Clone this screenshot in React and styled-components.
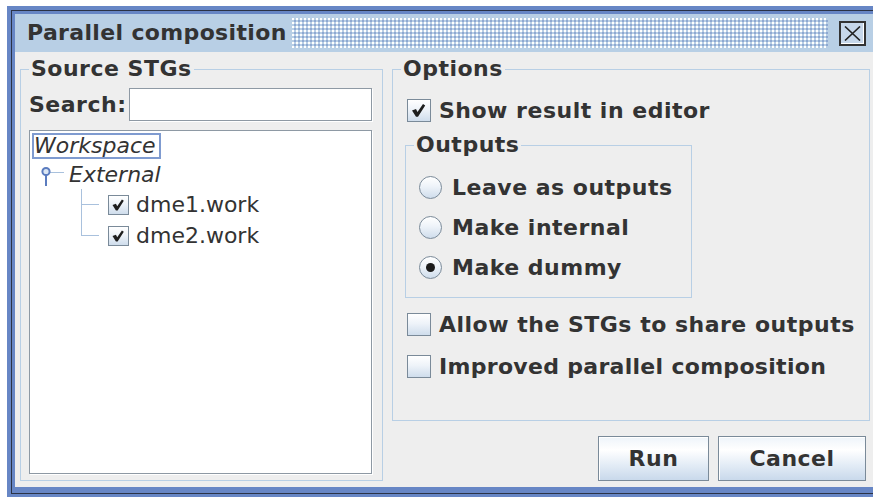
import React from 'react';
import styled, { createGlobalStyle } from 'styled-components';

const GlobalStyle = createGlobalStyle`
  html, body {
    margin: 0;
    padding: 0;
    background: #ffffff;
    overflow: hidden;
  }
  body {
    font-family: "DejaVu Sans", Verdana, sans-serif;
    font-size: 22px;
    color: #333333;
  }
  * { box-sizing: border-box; }
`;

const Frame = styled.div`
  margin: 6px 0 0 7px;
  width: 875px;
  padding: 4px;
  background: #6786c5;
`;

const Rim = styled.div`
  border: 1px solid #2b3346;
  padding: 3px 3px 6px 3px;
  background: #6786c5;
`;

const Window = styled.div`
  height: 473px;
  display: flex;
  flex-direction: column;
  background: #eeeeee;
`;

const TitleBar = styled.div`
  height: 38px;
  flex: none;
  display: flex;
  align-items: center;
  padding: 0 8px 0 12px;
  background: #b8cfe5;
`;

const Title = styled.div`
  font-weight: bold;
  letter-spacing: 0.35px;
  line-height: 26px;
  white-space: nowrap;
`;

const Bumps = styled.div`
  flex: 1;
  height: 30px;
  margin: 0 11px 0 5px;
  background-image:
    radial-gradient(circle at 1px 1px, #ffffff 0.9px, transparent 1.3px),
    radial-gradient(circle at 1px 1px, #8ea8d2 0.8px, transparent 1.2px);
  background-size: 4px 4px, 4px 4px;
  background-position: 0 0, 2px 2px;
`;

const CloseBox = styled.div`
  width: 27px;
  height: 25px;
  flex: none;
  border: 2px solid #333333;
  box-shadow: inset -1px -1px 0 #ffffff;
  background: #c6d7ea;
  display: flex;
  align-items: center;
  justify-content: center;
`;

const Body = styled.div`
  flex: 1;
  display: flex;
  gap: 9px;
  padding: 4px 4px 6px 5px;
  min-height: 0;
`;

const Group = styled.fieldset`
  margin: 0;
  min-width: 0;
  border: 1px solid #b8cfe5;
  display: flex;
  flex-direction: column;
  padding: ${(p) => p.$pad};
  width: ${(p) => (p.$w ? `${p.$w}px` : 'auto')};
  flex: ${(p) => (p.$grow ? 1 : 'none')};
`;

/* legend sits after the fieldset's left padding, so pull it back to 8px from the border */
const Caption = styled.legend`
  margin-left: ${(p) => p.$shift}px;
  padding: 0 2px;
  font-weight: bold;
  letter-spacing: 0.5px;
  line-height: 26px;
`;

const SearchRow = styled.div`
  display: flex;
  align-items: center;
  gap: 3px;
  height: 33px;
  flex: none;
`;

const Label = styled.span`
  font-weight: bold;
  letter-spacing: 0.5px;
  white-space: nowrap;
`;

const Field = styled.div`
  flex: 1;
  height: 33px;
  background: #ffffff;
  border: 1px solid #8e99a4;
  box-shadow: 1px 1px 0 #ffffff;
`;

const TreeBox = styled.div`
  flex: 1;
  margin-top: 9px;
  background: #ffffff;
  border: 1px solid #8e99a4;
  box-shadow: 1px 1px 0 #ffffff;
  padding: 1px 0 0 1px;
`;

const TreeRow = styled.div`
  display: flex;
  align-items: center;
  height: ${(p) => p.$h}px;
  padding-left: ${(p) => p.$indent}px;
`;

const FocusLabel = styled.span`
  font-style: italic;
  line-height: 22px;
  padding: 0 3px 0 0;
  border: 2px solid #7f9bd0;
`;

const NodeText = styled.span`
  font-style: ${(p) => (p.$italic ? 'italic' : 'normal')};
  margin-left: ${(p) => p.$gap}px;
  line-height: 26px;
  white-space: nowrap;
`;

const Connector = styled.div`
  width: 18px;
  height: 100%;
  flex: none;
  display: flex;
  flex-direction: column;
`;

const Elbow = styled.div`
  flex: 1;
  border-left: 1px solid #a9c1dd;
  border-bottom: 1px solid #a9c1dd;
`;

const Trail = styled.div`
  flex: 1;
  border-left: 1px solid ${(p) => (p.$last ? 'transparent' : '#a9c1dd')};
`;

const Box = styled.span`
  width: ${(p) => p.$size}px;
  height: ${(p) => p.$size - 1}px;
  flex: none;
  margin-left: ${(p) => p.$offset || 0}px;
  border: 1px solid #7a8a99;
  background: linear-gradient(to bottom, #ffffff 0%, #eef3f9 45%, #cfddec 100%);
  display: inline-flex;
  align-items: center;
  justify-content: center;
`;

const Radio = styled.span`
  width: 23px;
  height: 23px;
  flex: none;
  border-radius: 50%;
  border: 1px solid #7a8a99;
  background: linear-gradient(to bottom, #ffffff 0%, #eef3f9 45%, #cfddec 100%);
  display: inline-flex;
  align-items: center;
  justify-content: center;

  &::after {
    content: '';
    width: 9px;
    height: 9px;
    border-radius: 50%;
    background: #1c1c1c;
    display: ${(p) => (p.$on ? 'block' : 'none')};
  }
`;

const OptionRow = styled.div`
  display: flex;
  align-items: center;
  gap: ${(p) => p.$gap}px;
  height: ${(p) => p.$h}px;
  padding-left: ${(p) => p.$indent || 0}px;
  margin-top: ${(p) => p.$top || 0}px;
  flex: none;
  font-weight: bold;
  letter-spacing: ${(p) => p.$track ?? 0.5}px;
  white-space: nowrap;
`;

const RightColumn = styled.div`
  flex: 1;
  display: flex;
  flex-direction: column;
  min-width: 0;
`;

const Buttons = styled.div`
  display: flex;
  justify-content: flex-end;
  gap: 9px;
  margin-top: 15px;
  padding-right: 4px;
  flex: none;
`;

const Button = styled.button`
  width: ${(p) => p.$w}px;
  height: 45px;
  padding: 0;
  font-family: inherit;
  font-size: 22px;
  font-weight: bold;
  letter-spacing: 0.5px;
  color: #333333;
  border: 1px solid #7a8a99;
  border-radius: 0;
  box-shadow: inset 1px 1px 0 #ffffff;
  background: linear-gradient(to bottom, #eef4fa 0%, #ffffff 30%, #e3ecf6 65%, #c9d9eb 100%);
`;

function CheckMark({ size }) {
  return (
    <svg width={size - 2} height={size - 3} viewBox="0 0 22 21">
      <polygon points="4,10.5 8,9 9.5,12 15,4 17.2,5.6 10,16.8 8,16.8" fill="#1e1e1e" />
    </svg>
  );
}

function CheckBox({ size, checked, offset }) {
  return (
    <Box $size={size} $offset={offset}>
      {checked && <CheckMark size={size} />}
    </Box>
  );
}

function ExpandHandle() {
  return (
    <svg width="24" height="29" viewBox="0 0 24 29">
      <line x1="9" y1="12.5" x2="23" y2="12.5" stroke="#a9c1dd" strokeWidth="1" />
      <rect x="4" y="14" width="2" height="12" fill="#5b7cbf" />
      <circle cx="5" cy="11.5" r="3.6" fill="#dbe6f3" stroke="#5b7cbf" strokeWidth="2" />
    </svg>
  );
}

export default function App() {
  return (
    <>
      <GlobalStyle />
      <Frame>
        <Rim>
          <Window>
            <TitleBar>
              <Title>Parallel composition</Title>
              <Bumps />
              <CloseBox>
                <svg width="17" height="15" viewBox="0 0 17 15">
                  <path d="M1 0.5 L16 14.5 M16 0.5 L1 14.5" stroke="#222222" strokeWidth="1.6" />
                </svg>
              </CloseBox>
            </TitleBar>

            <Body>
              <Group $w={363} $pad="6px 10px 6px 8px">
                <Caption $shift={0}>Source STGs</Caption>
                <SearchRow>
                  <Label>Search:</Label>
                  <Field />
                </SearchRow>
                <TreeBox>
                  <TreeRow $h={28} $indent={1}>
                    <FocusLabel>Workspace</FocusLabel>
                  </TreeRow>
                  <TreeRow $h={29} $indent={10}>
                    <ExpandHandle />
                    <NodeText $italic $gap={4}>External</NodeText>
                  </TreeRow>
                  <TreeRow $h={31} $indent={50}>
                    <Connector>
                      <Elbow />
                      <Trail />
                    </Connector>
                    <CheckBox size={21} checked offset={9} />
                    <NodeText $gap={7}>dme1.work</NodeText>
                  </TreeRow>
                  <TreeRow $h={31} $indent={50}>
                    <Connector>
                      <Elbow />
                      <Trail $last />
                    </Connector>
                    <CheckBox size={21} checked offset={9} />
                    <NodeText $gap={7}>dme2.work</NodeText>
                  </TreeRow>
                </TreeBox>
              </Group>

              <RightColumn>
                <Group $grow $pad="13px 4px 0 12px">
                  <Caption $shift={-4}>Options</Caption>
                  <OptionRow $h={30} $gap={8} $indent={2}>
                    <CheckBox size={24} checked />
                    Show result in editor
                  </OptionRow>
                  <Group $w={287} $pad="9px 0 9px 13px" style={{ marginTop: 7 }}>
                    <Caption $shift={-5}>Outputs</Caption>
                    <OptionRow $h={40} $gap={10}>
                      <Radio />
                      Leave as outputs
                    </OptionRow>
                    <OptionRow $h={40} $gap={10}>
                      <Radio />
                      Make internal
                    </OptionRow>
                    <OptionRow $h={41} $gap={10}>
                      <Radio $on />
                      Make dummy
                    </OptionRow>
                  </Group>
                  <OptionRow $h={42} $gap={8} $indent={2} $top={5}>
                    <CheckBox size={24} />
                    Allow the STGs to share outputs
                  </OptionRow>
                  <OptionRow $h={42} $gap={8} $indent={2} $track={0.3}>
                    <CheckBox size={24} />
                    Improved parallel composition
                  </OptionRow>
                </Group>
                <Buttons>
                  <Button $w={111}>Run</Button>
                  <Button $w={148}>Cancel</Button>
                </Buttons>
              </RightColumn>
            </Body>
          </Window>
        </Rim>
      </Frame>
    </>
  );
}
